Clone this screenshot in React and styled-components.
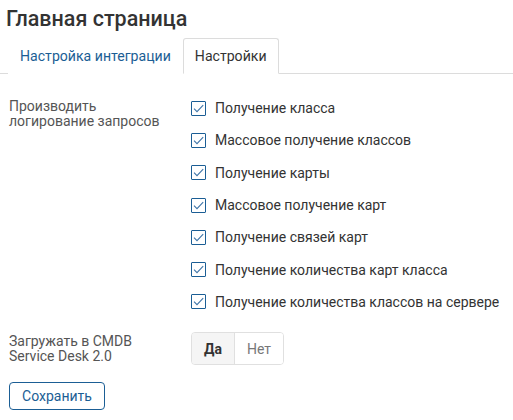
import { useState } from "react";
import styled, { createGlobalStyle } from "styled-components";

const blue = "#1b5e95";
const text = "#333333";
const muted = "#555555";
const line = "#dcdcdc";

const options = [
  "Получение класса",
  "Массовое получение классов",
  "Получение карты",
  "Массовое получение карт",
  "Получение связей карт",
  "Получение количества карт класса",
  "Получение количества классов на сервере",
];

const tabs = ["Настройка интеграции", "Настройки"];

const App = () => {
  const [activeTab, setActiveTab] = useState(1);
  const [checked, setChecked] = useState(options.map(() => true));
  const [upload, setUpload] = useState(true);

  const toggle = (index) =>
    setChecked((prev) => prev.map((value, i) => (i === index ? !value : value)));

  return (
    <Page>
      <GlobalStyle />
      <Title>Главная страница</Title>

      <TabBar>
        {tabs.map((tab, index) => (
          <Tab key={tab} $active={activeTab === index} onClick={() => setActiveTab(index)}>
            {tab}
          </Tab>
        ))}
      </TabBar>

      <Form>
        <Row>
          <Label $top="7px">Производить логирование запросов</Label>
          <CheckList>
            {options.map((option, index) => (
              <CheckRow key={option}>
                <Box
                  type="button"
                  aria-pressed={checked[index]}
                  onClick={() => toggle(index)}
                >
                  {checked[index] && (
                    <svg width="11" height="9" viewBox="0 0 11 9">
                      <path d="M1 4.6 L4 7.6 L10.2 1.2" fill="none" stroke="#3f75a8" strokeWidth="1.1" />
                    </svg>
                  )}
                </Box>
                <CheckText>{option}</CheckText>
              </CheckRow>
            ))}
          </CheckList>
        </Row>

        <Row $spaced>
          <Label $top="2px">Загружать в CMDB Service Desk 2.0</Label>
          <Segmented>
            <Segment $active={upload} onClick={() => setUpload(true)}>
              Да
            </Segment>
            <Segment $active={!upload} onClick={() => setUpload(false)}>
              Нет
            </Segment>
          </Segmented>
        </Row>

        <SaveButton type="button">Сохранить</SaveButton>
      </Form>
    </Page>
  );
};

// styles
const GlobalStyle = createGlobalStyle`
  body {
    margin: 0;
    background: #fff;
    font-family: Roboto, "Liberation Sans", sans-serif;
    color: ${text};
  }
`;

const Page = styled.div`
  width: 513px;
  padding-top: 6px;
`;

const Title = styled.h1`
  margin: 0 0 0 6px;
  font-size: 21.5px;
  font-weight: 500;
  line-height: 26px;
  color: ${text};
`;

const TabBar = styled.div`
  display: flex;
  margin-top: 6px;
  padding-left: 8px;
  border-bottom: 1px solid ${line};
`;

const Tab = styled.button`
  height: 36px;
  margin-bottom: -1px;
  padding: 0 11px;
  font: inherit;
  font-size: 14.1px;
  background: #fff;
  border: 1px solid ${({ $active }) => ($active ? line : "transparent")};
  border-bottom-color: ${({ $active }) => ($active ? "#fff" : "transparent")};
  border-radius: 3px 3px 0 0;
  color: ${({ $active }) => ($active ? text : blue)};
  cursor: pointer;
`;

const Form = styled.div`
  padding: 18px 0 0 9px;
`;

const Row = styled.div`
  display: grid;
  grid-template-columns: 182px 1fr;
  margin-top: ${({ $spaced }) => ($spaced ? "14px" : "0")};
`;

const Label = styled.div`
  max-width: 156px;
  padding-top: ${({ $top }) => $top};
  font-size: 14px;
  line-height: 15px;
  color: ${muted};
`;

const CheckList = styled.div`
  display: flex;
  flex-direction: column;
`;

const CheckRow = styled.label`
  display: flex;
  align-items: center;
  gap: 9px;
  height: 32.3px;
`;

const Box = styled.button`
  display: flex;
  align-items: center;
  justify-content: center;
  flex: none;
  width: 15px;
  height: 15px;
  padding: 0;
  background: #fff;
  border: 1px solid ${blue};
  border-radius: 1px;
  cursor: pointer;
`;

const CheckText = styled.span`
  font-size: 14px;
  color: ${text};
`;

const Segmented = styled.div`
  display: flex;
  width: max-content;
  height: 31px;
  border: 1px solid #e0e0e0;
  border-radius: 4px;
  overflow: hidden;
`;

const Segment = styled.button`
  padding: 0 12px;
  font: inherit;
  font-size: 14px;
  font-weight: ${({ $active }) => ($active ? 700 : 400)};
  color: ${({ $active }) => ($active ? text : "#777")};
  background: ${({ $active }) => ($active ? "#f5f5f5" : "#fff")};
  border: none;
  cursor: pointer;

  & + & {
    border-left: 1px solid #e0e0e0;
  }
`;

const SaveButton = styled.button`
  display: block;
  width: 96px;
  height: 28px;
  margin-top: 17px;
  padding: 0;
  font: inherit;
  font-size: 14px;
  color: ${blue};
  background: #fff;
  border: 1px solid ${blue};
  border-radius: 4px;
  cursor: pointer;
`;

export default App;
